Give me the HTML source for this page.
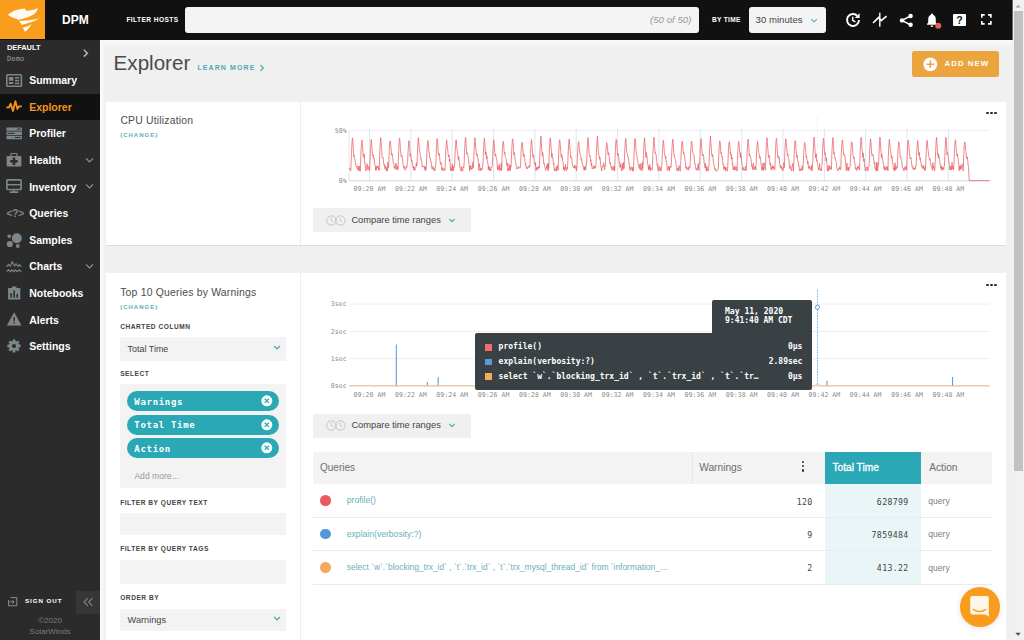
<!DOCTYPE html><html><head><meta charset="utf-8"><title>Explorer</title><style>
*{margin:0;padding:0;box-sizing:border-box}
html,body{width:1024px;height:640px;overflow:hidden;background:#f0f0f0;font-family:"Liberation Sans", sans-serif;}
.b{position:absolute}
.t{position:absolute;height:20px;line-height:20px;white-space:nowrap;color:#444;font-size:10px}
.m{font-family:"DejaVu Sans Mono", "Liberation Mono", monospace}
.nav{color:#fff;font-weight:bold;font-size:10.5px}
.lab{font-weight:bold;font-size:6.6px;letter-spacing:0.53px;color:#444}
.chg{font-weight:bold;font-size:6px;letter-spacing:1.0px;color:#5aacb6}
.ax{font-family:"DejaVu Sans Mono", "Liberation Mono", monospace;font-size:6.6px;color:#8a8a8a}
.tt{font-family:"DejaVu Sans Mono", "Liberation Mono", monospace;font-weight:bold;font-size:8px;color:#fff}
.pill{position:absolute;left:127.2px;width:151.6px;height:20px;border-radius:10px;background:#2aa8b5}
.pill span{position:absolute;left:7.1px;top:0.6px;line-height:20px;font-family:"DejaVu Sans Mono", "Liberation Mono", monospace;font-weight:bold;font-size:9px;color:#fff;letter-spacing:0.7px}
.q{font-size:8.6px;color:#6ab0bc}
.num{font-family:"DejaVu Sans Mono", "Liberation Mono", monospace;font-size:8.2px;color:#444;letter-spacing:0.35px;margin-right:-0.35px}
.act{font-size:8.6px;color:#808080}
svg{position:absolute;overflow:visible}
</style></head><body>
<div class="b " style="left:100.0px;top:40.0px;width:912.0px;height:600.0px;background:#f0f0f0"></div>
<div class="b " style="left:100.0px;top:40.0px;width:912.0px;height:7.0px;background:linear-gradient(#fafafa,#f6f6f6 40%,#f0f0f0)"></div>
<div class="b " style="left:100.0px;top:40.0px;width:2.3px;height:600.0px;background:#fafafa"></div>
<div class="b " style="left:102.0px;top:40.0px;width:2.0px;height:600.0px;background:linear-gradient(90deg,#f8f8f8,#f3f3f3)"></div>
<div class="b " style="left:104.0px;top:47.0px;width:2.0px;height:593.0px;background:#f1f1f1"></div>
<div class="b " style="left:106.0px;top:101.5px;width:900.0px;height:144.5px;background:#fff;border-bottom:1px solid #ddd"></div>
<div class="b " style="left:299.5px;top:101.5px;width:1.0px;height:143.5px;background:#eee"></div>
<div class="b " style="left:106.0px;top:273.0px;width:900.0px;height:367.0px;background:#fff"></div>
<div class="b " style="left:299.5px;top:273.0px;width:1.0px;height:367.0px;background:#eee"></div>
<div class="b " style="left:0.0px;top:0.0px;width:1012.4px;height:40.0px;background:#111"></div>
<div class="b " style="left:0.0px;top:0.0px;width:45.0px;height:39.4px;background:#f99d1c"></div>
<svg style="left:0;top:0" width="45" height="40" viewBox="0 0 45 40"><g fill="#fffaf0">
<path d="M7.8 15 C10.5 12.6 13.4 11 16.5 10 C19.2 9.2 22 8.6 24.6 8.4 L26.2 10.7 C30.4 10.6 34.6 9.6 37.9 7.9 C37.4 10 36.4 11.8 35 13.2 C32.8 15.2 29.8 16.6 26.8 17.6 C23.8 18.6 20.8 19.2 18.2 20.1 C16.4 18.8 14.6 18 12.6 17.6 C10.6 16.6 9.2 15.8 7.8 15 Z"/>
<path d="M19.3 20.9 C25.6 20.6 32.4 19.8 38.8 18.4 C35.6 20.4 31.8 22 28.2 23.1 C26 23.8 23.6 24.4 21.6 25.1 Z"/>
<path d="M22.8 27.4 C26.2 27 29.4 25.8 32 24 C30 26.8 27.6 29.6 25 32 Z"/>
</g></svg>
<div class="t " style="left:62.0px;top:10.0px;color:#fff;font-weight:bold;font-size:12px">DPM</div>
<div class="t " style="left:126.4px;top:10.0px;color:#fff;font-weight:bold;font-size:6.6px;letter-spacing:0.42px">FILTER HOSTS</div>
<div class="b " style="left:185.4px;top:6.8px;width:513.2px;height:26.4px;background:#f4f4f4;border-radius:3px"></div>
<div class="t " style="right:332.6px;text-align:right;top:9.8px;color:#999;font-style:italic;font-size:9.7px">(50 of 50)</div>
<div class="t " style="left:712.0px;top:10.0px;color:#fff;font-weight:bold;font-size:6.6px;letter-spacing:0.3px">BY TIME</div>
<div class="b " style="left:748.6px;top:6.8px;width:77.4px;height:26.4px;background:#f4f4f4;border-radius:3px"></div>
<div class="t " style="left:755.6px;top:9.8px;color:#444;font-size:9.6px">30 minutes</div>
<svg style="left:809.5px;top:17.5px" width="8" height="6" viewBox="0 0 8 6"><path d="M1.2 1.2 L4 4 L6.8 1.2" fill="none" stroke="#4fb0bd" stroke-width="1.1"/></svg>
<svg style="left:844.7px;top:12px" width="16" height="16" viewBox="0 0 16 16" fill="none" stroke="#fff" stroke-width="1.9">
<path d="M12.4 3.9 A6 6 0 1 0 14 8"/><path d="M14.6 1.2 L14.6 6 L9.8 6 Z" fill="#fff" stroke="none"/>
<path d="M7.7 4.8 L7.7 8.3 L10.4 9.8" stroke-width="1.5"/></svg>
<svg style="left:871.6px;top:12px" width="16" height="16" viewBox="0 0 16 16" fill="none" stroke="#fff" stroke-width="1.7">
<path d="M1 11 L6.6 5.6 L9.2 8.6 L14.6 4.2"/><path d="M7.8 0.8 L7.8 14.8" stroke-width="1.4"/></svg>
<svg style="left:899px;top:12.6px" width="15" height="15" viewBox="0 0 15 15"><g stroke="#fff" stroke-width="1.5" fill="none"><path d="M11.5 3 L3 7.4 L11.5 11.8"/></g>
<g fill="#fff"><circle cx="11.6" cy="3" r="2.2"/><circle cx="3" cy="7.4" r="2.2"/><circle cx="11.6" cy="11.8" r="2.2"/></g></svg>
<svg style="left:924.3px;top:11.5px" width="18" height="18" viewBox="0 0 18 18"><path fill="#fff" d="M8 1.6 C8.8 1.6 9.1 2.1 9.1 2.7 C11 3.3 11.8 5 11.8 7.2 L11.8 10.4 L13 12 L13 12.8 L3 12.8 L3 12 L4.2 10.4 L4.2 7.2 C4.2 5 5 3.3 6.9 2.7 C6.9 2.1 7.2 1.6 8 1.6 Z M6.7 13.5 L9.3 13.5 C9.3 14.4 8.8 15 8 15 C7.2 15 6.7 14.4 6.7 13.5 Z"/>
<circle cx="14.2" cy="13.7" r="3" fill="#ef5a5a"/></svg>
<div class="b " style="left:953.2px;top:13.7px;width:12.5px;height:11.9px;background:#fff;border-radius:1px"></div>
<div class="t " style="left:859.4px;width:200px;text-align:center;top:9.9px;color:#111;font-weight:bold;font-size:10.5px">?</div>
<svg style="left:980.6px;top:14.4px" width="10.7" height="10.7" viewBox="0 0 11 11" fill="none" stroke="#fff" stroke-width="1.7">
<path d="M0.85 3.8 L0.85 0.85 L3.8 0.85"/><path d="M7.2 0.85 L10.15 0.85 L10.15 3.8"/><path d="M10.15 7.2 L10.15 10.15 L7.2 10.15"/><path d="M3.8 10.15 L0.85 10.15 L0.85 7.2"/></svg>
<div class="b " style="left:1012.4px;top:0.0px;width:11.6px;height:640.0px;background:#f1f1f1"></div>
<div class="b " style="left:1012.0px;top:0.0px;width:1.0px;height:40.0px;background:#666"></div>
<div class="b " style="left:1014.2px;top:11.4px;width:8.8px;height:460.0px;background:#c1c1c1"></div>
<svg style="left:1012.4px;top:0" width="12" height="12" viewBox="0 0 12 12"><path d="M3.6 7.6 L6.1 4.8 L8.6 7.6 Z" fill="#a3a3a3"/></svg>
<svg style="left:1012.4px;top:628px" width="12" height="12" viewBox="0 0 12 12"><path d="M3.4 4.8 L8.8 4.8 L6.1 7.8 Z" fill="#505050"/></svg>
<div class="b " style="left:0.0px;top:40.0px;width:100.0px;height:600.0px;background:#2b2b2b"></div>
<div class="t " style="left:6.9px;top:37.6px;color:#fff;font-weight:bold;font-size:7.4px">DEFAULT</div>
<div class="t m" style="left:6.9px;top:48.6px;color:#9a9a9a;font-size:7.3px">Demo</div>
<svg style="left:82px;top:48px" width="8" height="11" viewBox="0 0 8 11"><path d="M1.8 1.8 L5.4 5.2 L1.8 8.6" fill="none" stroke="#b4b4b4" stroke-width="1.5"/></svg>
<div class="b " style="left:0.0px;top:94.0px;width:100.0px;height:25.5px;background:#111"></div>
<div class="t nav" style="left:29.2px;top:70.1px;">Summary</div>
<div class="t nav" style="left:29.2px;top:96.7px;color:#f7941d">Explorer</div>
<div class="t nav" style="left:29.2px;top:123.3px;">Profiler</div>
<div class="t nav" style="left:29.2px;top:149.9px;">Health</div>
<svg style="left:84.6px;top:156.7px" width="9" height="7" viewBox="0 0 9 7"><path d="M1 1.4 L4.5 4.9 L8 1.4" fill="none" stroke="#8b9091" stroke-width="1.2"/></svg>
<div class="t nav" style="left:29.2px;top:176.5px;">Inventory</div>
<svg style="left:84.6px;top:183.3px" width="9" height="7" viewBox="0 0 9 7"><path d="M1 1.4 L4.5 4.9 L8 1.4" fill="none" stroke="#8b9091" stroke-width="1.2"/></svg>
<div class="t nav" style="left:29.2px;top:203.1px;">Queries</div>
<div class="t nav" style="left:29.2px;top:229.7px;">Samples</div>
<div class="t nav" style="left:29.2px;top:256.3px;">Charts</div>
<svg style="left:84.6px;top:263.1px" width="9" height="7" viewBox="0 0 9 7"><path d="M1 1.4 L4.5 4.9 L8 1.4" fill="none" stroke="#8b9091" stroke-width="1.2"/></svg>
<div class="t nav" style="left:29.2px;top:282.9px;">Notebooks</div>
<div class="t nav" style="left:29.2px;top:309.5px;">Alerts</div>
<div class="t nav" style="left:29.2px;top:336.1px;">Settings</div>
<svg style="left:6.2px;top:73.8px" width="16" height="13" viewBox="0 0 16 13"><rect x="0.8" y="0.8" width="14.6" height="11.4" rx="0.8" fill="none" stroke="#7d8789" stroke-width="1.6"/><rect x="2.8" y="3" width="4.6" height="3.8" fill="#7d8789"/><rect x="2.8" y="8" width="4.6" height="2" fill="#7d8789"/><rect x="9" y="3" width="4.2" height="1.6" fill="#7d8789"/><rect x="9" y="5.8" width="4.2" height="1.6" fill="#7d8789"/><rect x="9" y="8.6" width="4.2" height="1.6" fill="#7d8789"/></svg>
<svg style="left:6.2px;top:100.1px" width="16" height="12" viewBox="0 0 16 12"><path d="M0.4 7.4 L3 7.4 L4.6 3.6 L7 11 L9.4 1.2 L11.4 9 L12.8 6.4 L15.8 6.4" fill="none" stroke="#f7941d" stroke-width="1.8" stroke-linejoin="round"/></svg>
<svg style="left:6.2px;top:126.8px" width="16" height="13" viewBox="0 0 16 13"><rect x="0.4" y="0.4" width="15.6" height="3.4" rx="0.6" fill="#7d8789"/><rect x="0.4" y="4.6" width="15.6" height="3.4" rx="0.6" fill="#7d8789"/><rect x="0.4" y="8.8" width="15.6" height="3.4" rx="0.6" fill="#7d8789"/><rect x="11" y="1.6" width="3.6" height="1" fill="#2b2b2b"/><rect x="1.6" y="5.8" width="7" height="1" fill="#2b2b2b"/><rect x="9" y="10" width="5.6" height="1" fill="#2b2b2b"/></svg>
<svg style="left:6.2px;top:153.3px" width="16" height="14" viewBox="0 0 16 14"><path d="M5 3 L5 1.2 Q5 0.5 5.7 0.5 L10.3 0.5 Q11 0.5 11 1.2 L11 3" fill="none" stroke="#7d8789" stroke-width="1.2"/><rect x="0.6" y="3" width="14.8" height="10.6" rx="1" fill="#7d8789"/><path d="M6.7 4.6 L9.3 4.6 L9.3 7 L11.7 7 L11.7 9.6 L9.3 9.6 L9.3 12 L6.7 12 L6.7 9.6 L4.3 9.6 L4.3 7 L6.7 7 Z" fill="#2b2b2b"/></svg>
<svg style="left:6.2px;top:179.3px" width="16" height="14" viewBox="0 0 16 14"><rect x="0.9" y="0.9" width="14.2" height="9.6" rx="0.8" fill="none" stroke="#7d8789" stroke-width="1.7"/><path d="M0.9 5.7 L15.1 5.7" stroke="#7d8789" stroke-width="1.5"/><path d="M8 10.5 L8 12.6 M3.8 13.1 L12.2 13.1" stroke="#7d8789" stroke-width="1.6"/></svg>
<div class="t " style="left:6.6px;top:203.9px;color:#7d8789;font-weight:bold;font-size:10.2px;letter-spacing:-0.25px">&lt;?&gt;</div>
<svg style="left:6.2px;top:232.6px" width="16" height="15.5" viewBox="0 0 16 15.5"><circle cx="10.8" cy="5.2" r="5" fill="#7d8789"/><circle cx="3.8" cy="11" r="3.1" fill="#7d8789"/><circle cx="3.2" cy="3.2" r="1.8" fill="#7d8789"/><circle cx="11.8" cy="13" r="1.9" fill="#7d8789"/></svg>
<svg style="left:6.2px;top:260.7px" width="16" height="12" viewBox="0 0 16 12"><path d="M0.6 5.8 L2.6 3.4 L4.2 5.2 L6.2 0.8 L8.4 5 L10 2.6 L12 5.4 L13.6 3.6 L15.4 6" fill="none" stroke="#7d8789" stroke-width="1.1"/><path d="M0.6 10.6 L2.4 8.8 L4.2 10.6 L6 8.8 L7.8 10.6 L9.6 8.8 L11.4 10.6 L13.2 8.8 L15.4 10.8" fill="none" stroke="#7d8789" stroke-width="1.1"/></svg>
<svg style="left:6.2px;top:285.5px" width="16" height="14" viewBox="0 0 16 14"><path d="M2.1 2 L6 2 L6 0.6 L10.4 0.6 L10.4 2 L14.3 2 L14.3 13.6 L2.1 13.6 Z" fill="#7d8789"/><rect x="4.4" y="7" width="1.5" height="4.8" fill="#2b2b2b"/><rect x="7.45" y="4.4" width="1.5" height="7.4" fill="#2b2b2b"/><rect x="10.5" y="8" width="1.5" height="3.8" fill="#2b2b2b"/></svg>
<svg style="left:6.2px;top:312.3px" width="16" height="14" viewBox="0 0 16 14"><path d="M8.2 0.8 L15.1 13.2 L1.3 13.2 Z" fill="#7d8789" stroke="#7d8789" stroke-width="0.6" stroke-linejoin="round"/><rect x="7.5" y="5" width="1.4" height="4.2" fill="#2b2b2b"/><rect x="7.5" y="10.2" width="1.4" height="1.4" fill="#2b2b2b"/></svg>
<svg style="left:6.2px;top:339.1px" width="16" height="14" viewBox="0 0 16 14"><rect x="6.6" y="0.4" width="2.8" height="3.4" rx="0.4" fill="#7d8789" transform="rotate(0 8 7)"/><rect x="6.6" y="0.4" width="2.8" height="3.4" rx="0.4" fill="#7d8789" transform="rotate(45 8 7)"/><rect x="6.6" y="0.4" width="2.8" height="3.4" rx="0.4" fill="#7d8789" transform="rotate(90 8 7)"/><rect x="6.6" y="0.4" width="2.8" height="3.4" rx="0.4" fill="#7d8789" transform="rotate(135 8 7)"/><rect x="6.6" y="0.4" width="2.8" height="3.4" rx="0.4" fill="#7d8789" transform="rotate(180 8 7)"/><rect x="6.6" y="0.4" width="2.8" height="3.4" rx="0.4" fill="#7d8789" transform="rotate(225 8 7)"/><rect x="6.6" y="0.4" width="2.8" height="3.4" rx="0.4" fill="#7d8789" transform="rotate(270 8 7)"/><rect x="6.6" y="0.4" width="2.8" height="3.4" rx="0.4" fill="#7d8789" transform="rotate(315 8 7)"/><circle cx="8" cy="7" r="5" fill="#7d8789"/><circle cx="8" cy="7" r="2.1" fill="#2b2b2b"/></svg>
<svg style="left:8px;top:596.6px" width="10" height="10" viewBox="0 0 10 10"><path d="M2.4 0.6 L8.8 0.6 L8.8 8.8 L0.6 8.8 L0.6 3" fill="none" stroke="#8b9091" stroke-width="1"/><path d="M1.6 4.9 L6 4.9 M4.4 3.2 L6.1 4.9 L4.4 6.6" fill="none" stroke="#8b9091" stroke-width="1"/></svg>
<div class="t " style="left:25.0px;top:591.4px;color:#fff;font-weight:bold;font-size:6.2px;letter-spacing:0.95px">SIGN OUT</div>
<div class="b " style="left:76.4px;top:590.6px;width:23.6px;height:23.2px;background:#363636"></div>
<svg style="left:83px;top:597.2px" width="11" height="10" viewBox="0 0 11 10"><path d="M4.8 1 L1.2 5 L4.8 9 M9.4 1 L5.8 5 L9.4 9" fill="none" stroke="#8b9091" stroke-width="1.1"/></svg>
<div class="t " style="left:-50.0px;width:200px;text-align:center;top:611.4px;color:#7c7c7c;font-size:8px">©2020</div>
<div class="t " style="left:-50.0px;width:200px;text-align:center;top:622.4px;color:#7c7c7c;font-size:8px">SolarWinds</div>
<div class="t " style="left:113.6px;top:53.2px;color:#4a4a4a;font-size:20.6px;height:30px;line-height:30px;margin-top:-5px">Explorer</div>
<div class="t " style="left:197.4px;top:58.2px;color:#4fa9b4;font-weight:bold;font-size:7px;letter-spacing:1.1px">LEARN MORE</div>
<svg style="left:259.4px;top:64.4px" width="6" height="8" viewBox="0 0 6 8"><path d="M1.4 1 L4.4 3.9 L1.4 6.8" fill="none" stroke="#4fa9b4" stroke-width="1.2"/></svg>
<div class="b " style="left:911.8px;top:50.8px;width:87.4px;height:26.4px;background:#eba43e;border-radius:2.5px"></div>
<svg style="left:922.6px;top:56.6px" width="15" height="15" viewBox="0 0 15 15"><circle cx="7.3" cy="7.3" r="6.9" fill="#fff"/><path d="M7.3 3.6 L7.3 11 M3.6 7.3 L11 7.3" stroke="#eba43e" stroke-width="1.5"/></svg>
<div class="t " style="left:944.6px;top:54.0px;color:#fff;font-weight:bold;font-size:7.8px;letter-spacing:1.05px">ADD NEW</div>
<div class="t " style="left:120.4px;top:110.6px;font-size:10.4px;letter-spacing:0.2px;color:#4c4c4c">CPU Utilization</div>
<div class="t chg" style="left:120.2px;top:125.2px;">(CHANGE)</div>
<div class="b" style="left:986.3px;top:111.5px;width:2.5px;height:2.5px;border-radius:50%;background:#2a2a2a"></div>
<div class="b" style="left:990.1px;top:111.5px;width:2.5px;height:2.5px;border-radius:50%;background:#2a2a2a"></div>
<div class="b" style="left:994.0px;top:111.5px;width:2.5px;height:2.5px;border-radius:50%;background:#2a2a2a"></div>
<svg style="left:0;top:0" width="1024" height="640" viewBox="0 0 1024 640"><path d="M349.0 130.6 L989.6 130.6" stroke="#efefef" stroke-width="1"/><path d="M369.5 129.0 L369.5 180.8" stroke="#cddee7" stroke-width="0.7"/><path d="M410.9 129.0 L410.9 180.8" stroke="#cddee7" stroke-width="0.7"/><path d="M452.2 129.0 L452.2 180.8" stroke="#cddee7" stroke-width="0.7"/><path d="M493.6 129.0 L493.6 180.8" stroke="#cddee7" stroke-width="0.7"/><path d="M534.9 129.0 L534.9 180.8" stroke="#cddee7" stroke-width="0.7"/><path d="M576.2 129.0 L576.2 180.8" stroke="#cddee7" stroke-width="0.7"/><path d="M617.6 129.0 L617.6 180.8" stroke="#cddee7" stroke-width="0.7"/><path d="M659.0 129.0 L659.0 180.8" stroke="#cddee7" stroke-width="0.7"/><path d="M700.3 129.0 L700.3 180.8" stroke="#cddee7" stroke-width="0.7"/><path d="M741.7 129.0 L741.7 180.8" stroke="#cddee7" stroke-width="0.7"/><path d="M783.0 129.0 L783.0 180.8" stroke="#cddee7" stroke-width="0.7"/><path d="M824.4 129.0 L824.4 180.8" stroke="#cddee7" stroke-width="0.7"/><path d="M865.7 129.0 L865.7 180.8" stroke="#cddee7" stroke-width="0.7"/><path d="M907.1 129.0 L907.1 180.8" stroke="#cddee7" stroke-width="0.7"/><path d="M948.4 129.0 L948.4 180.8" stroke="#cddee7" stroke-width="0.7"/><path d="M349.0 130.6 L349.0 180.8" stroke="#e6e6e6" stroke-width="1"/><path d="M349.0 180.8 L989.6 180.8" stroke="#d6d6d6" stroke-width="1"/><path d="M349.00 168.2 L349.36 168.7 L349.72 168.0 L350.08 168.4 L350.44 170.7 L350.80 170.8 L351.16 161.4 L351.52 153.4 L351.88 144.7 L352.24 139.2 L352.60 137.9 L352.96 143.0 L353.32 149.6 L353.68 156.4 L354.04 154.9 L354.40 158.2 L354.76 158.9 L355.12 160.4 L355.48 164.1 L355.84 164.0 L356.20 166.9 L356.56 166.6 L356.92 167.7 L357.28 167.6 L357.64 169.7 L358.00 165.8 L358.36 167.4 L358.72 170.0 L359.08 170.9 L359.44 169.1 L359.80 166.0 L360.16 171.3 L360.52 162.6 L360.88 154.2 L361.24 146.3 L361.60 142.3 L361.96 140.1 L362.32 143.3 L362.68 147.9 L363.04 154.3 L363.40 157.4 L363.76 156.5 L364.12 153.9 L364.48 157.0 L364.84 163.2 L365.20 164.9 L365.56 168.4 L365.92 170.9 L366.28 170.3 L366.64 168.8 L367.00 163.7 L367.36 164.2 L367.72 168.9 L368.08 169.8 L368.44 166.8 L368.80 166.4 L369.16 166.5 L369.52 170.7 L369.88 165.2 L370.24 156.1 L370.60 147.5 L370.96 143.0 L371.32 139.5 L371.68 143.4 L372.04 148.2 L372.40 151.8 L372.76 156.4 L373.12 154.8 L373.48 157.2 L373.84 158.5 L374.20 157.7 L374.56 163.0 L374.92 165.1 L375.28 166.5 L375.64 170.4 L376.00 166.7 L376.36 170.2 L376.72 166.1 L377.08 166.0 L377.44 167.9 L377.80 167.2 L378.16 165.9 L378.52 169.8 L378.88 168.0 L379.24 170.3 L379.60 157.9 L379.96 149.0 L380.32 142.4 L380.68 137.6 L381.04 140.7 L381.40 146.6 L381.76 149.2 L382.12 156.6 L382.48 158.2 L382.84 157.5 L383.20 158.2 L383.56 162.7 L383.92 164.4 L384.28 165.9 L384.64 164.6 L385.00 169.3 L385.36 165.8 L385.72 167.4 L386.08 167.0 L386.44 171.2 L386.80 167.4 L387.16 171.1 L387.52 168.6 L387.88 162.2 L388.24 168.2 L388.60 166.3 L388.96 158.4 L389.32 149.2 L389.68 143.9 L390.04 140.9 L390.40 141.5 L390.76 145.5 L391.12 148.8 L391.48 155.2 L391.84 153.5 L392.20 153.6 L392.56 157.2 L392.92 158.9 L393.28 162.8 L393.64 164.2 L394.00 164.4 L394.36 167.7 L394.72 166.4 L395.08 169.1 L395.44 168.1 L395.80 163.1 L396.16 163.6 L396.52 167.9 L396.88 170.0 L397.24 168.5 L397.60 166.3 L397.96 169.6 L398.32 160.7 L398.68 151.6 L399.04 143.4 L399.40 138.3 L399.76 138.4 L400.12 143.3 L400.48 150.5 L400.84 153.1 L401.20 156.9 L401.56 156.1 L401.92 155.5 L402.28 156.8 L402.64 159.4 L403.00 164.9 L403.36 166.4 L403.72 166.0 L404.08 168.5 L404.44 166.6 L404.80 166.0 L405.16 170.3 L405.52 169.7 L405.88 169.0 L406.24 168.5 L406.60 166.6 L406.96 167.3 L407.32 162.9 L407.68 161.4 L408.04 152.6 L408.40 146.3 L408.76 140.8 L409.12 140.5 L409.48 144.7 L409.84 149.2 L410.20 156.4 L410.56 153.1 L410.92 157.1 L411.28 159.2 L411.64 161.6 L412.00 160.5 L412.36 164.1 L412.72 165.7 L413.08 167.6 L413.44 166.0 L413.80 170.2 L414.16 166.8 L414.52 168.7 L414.88 170.3 L415.24 169.4 L415.60 168.4 L415.96 167.1 L416.32 162.7 L416.68 166.1 L417.04 163.8 L417.40 154.3 L417.76 146.2 L418.12 140.0 L418.48 137.5 L418.84 142.1 L419.20 147.5 L419.56 151.1 L419.92 152.3 L420.28 155.7 L420.64 155.8 L421.00 160.3 L421.36 159.5 L421.72 161.4 L422.08 165.2 L422.44 167.3 L422.80 166.3 L423.16 165.9 L423.52 166.9 L423.88 166.2 L424.24 165.8 L424.60 168.8 L424.96 167.0 L425.32 171.1 L425.68 166.8 L426.04 169.4 L426.40 165.3 L426.76 156.2 L427.12 148.1 L427.48 143.6 L427.84 140.4 L428.20 143.7 L428.56 147.2 L428.92 152.3 L429.28 152.2 L429.64 157.9 L430.00 158.1 L430.36 158.0 L430.72 161.7 L431.08 161.5 L431.44 164.8 L431.80 168.4 L432.16 168.2 L432.52 169.2 L432.88 166.3 L433.24 166.6 L433.60 168.4 L433.96 170.2 L434.32 168.5 L434.68 171.1 L435.04 169.0 L435.40 168.2 L435.76 163.9 L436.12 157.1 L436.48 148.8 L436.84 142.4 L437.20 138.5 L437.56 142.0 L437.92 146.6 L438.28 153.9 L438.64 155.2 L439.00 153.4 L439.36 153.7 L439.72 158.1 L440.08 161.2 L440.44 164.3 L440.80 164.4 L441.16 162.6 L441.52 163.4 L441.88 170.2 L442.24 167.5 L442.60 169.3 L442.96 170.7 L443.32 170.6 L443.68 169.9 L444.04 168.3 L444.40 169.0 L444.76 170.4 L445.12 167.8 L445.48 158.7 L445.84 149.1 L446.20 144.2 L446.56 139.9 L446.92 141.9 L447.28 145.6 L447.64 149.2 L448.00 152.3 L448.36 156.3 L448.72 156.9 L449.08 155.1 L449.44 161.3 L449.80 159.1 L450.16 162.4 L450.52 170.5 L450.88 167.2 L451.24 170.7 L451.60 168.9 L451.96 170.6 L452.32 164.0 L452.68 170.2 L453.04 166.2 L453.40 170.6 L453.76 167.1 L454.12 166.7 L454.48 167.2 L454.84 160.1 L455.20 151.1 L455.56 144.5 L455.92 140.2 L456.28 139.9 L456.64 144.9 L457.00 149.7 L457.36 151.1 L457.72 152.6 L458.08 158.1 L458.44 159.9 L458.80 156.5 L459.16 161.9 L459.52 162.6 L459.88 168.0 L460.24 168.7 L460.60 168.9 L460.96 171.2 L461.32 166.6 L461.68 168.8 L462.04 169.0 L462.40 170.4 L462.76 171.2 L463.12 166.8 L463.48 167.8 L463.84 168.0 L464.20 161.0 L464.56 152.2 L464.92 145.6 L465.28 139.0 L465.64 137.4 L466.00 142.6 L466.36 148.6 L466.72 154.1 L467.08 152.7 L467.44 153.3 L467.80 155.8 L468.16 157.2 L468.52 159.7 L468.88 164.3 L469.24 165.2 L469.60 170.9 L469.96 165.2 L470.32 169.3 L470.68 167.8 L471.04 166.0 L471.40 169.4 L471.76 168.1 L472.12 169.1 L472.48 167.7 L472.84 162.3 L473.20 167.9 L473.56 163.6 L473.92 154.3 L474.28 147.2 L474.64 141.1 L475.00 137.7 L475.36 142.9 L475.72 148.5 L476.08 150.4 L476.44 154.7 L476.80 155.4 L477.16 153.9 L477.52 158.1 L477.88 157.9 L478.24 162.5 L478.60 164.2 L478.96 170.8 L479.32 163.6 L479.68 166.1 L480.04 168.7 L480.40 168.5 L480.76 170.9 L481.12 168.9 L481.48 168.0 L481.84 169.7 L482.20 169.7 L482.56 166.1 L482.92 165.1 L483.28 156.4 L483.64 148.2 L484.00 141.7 L484.36 138.4 L484.72 141.6 L485.08 147.0 L485.44 155.0 L485.80 151.9 L486.16 152.7 L486.52 159.0 L486.88 155.8 L487.24 160.9 L487.60 163.0 L487.96 162.7 L488.32 169.9 L488.68 166.1 L489.04 168.7 L489.40 166.8 L489.76 170.6 L490.12 168.7 L490.48 171.0 L490.84 170.6 L491.20 167.6 L491.56 168.0 L491.92 167.0 L492.28 165.8 L492.64 156.9 L493.00 149.2 L493.36 144.5 L493.72 139.8 L494.08 142.2 L494.44 146.7 L494.80 152.5 L495.16 156.2 L495.52 154.2 L495.88 155.7 L496.24 157.4 L496.60 159.2 L496.96 160.9 L497.32 167.0 L497.68 169.9 L498.04 166.2 L498.40 167.5 L498.76 169.8 L499.12 164.3 L499.48 164.8 L499.84 170.8 L500.20 168.2 L500.56 169.2 L500.92 169.4 L501.28 163.1 L501.64 170.6 L502.00 158.5 L502.36 149.2 L502.72 145.3 L503.08 141.3 L503.44 142.6 L503.80 145.8 L504.16 151.9 L504.52 153.8 L504.88 152.3 L505.24 156.9 L505.60 157.3 L505.96 158.2 L506.32 159.5 L506.68 165.1 L507.04 165.7 L507.40 162.9 L507.76 170.8 L508.12 168.6 L508.48 169.6 L508.84 170.8 L509.20 164.1 L509.56 169.6 L509.92 167.4 L510.28 170.5 L510.64 165.7 L511.00 167.3 L511.36 159.6 L511.72 150.5 L512.08 143.9 L512.44 139.5 L512.80 138.8 L513.16 144.6 L513.52 150.5 L513.88 154.7 L514.24 152.5 L514.60 153.3 L514.96 158.8 L515.32 160.1 L515.68 162.5 L516.04 165.1 L516.40 167.6 L516.76 169.1 L517.12 168.1 L517.48 168.3 L517.84 168.2 L518.20 167.1 L518.56 166.2 L518.92 168.4 L519.28 168.1 L519.64 167.7 L520.00 168.2 L520.36 167.3 L520.72 161.4 L521.08 152.1 L521.44 147.3 L521.80 142.7 L522.16 142.3 L522.52 144.8 L522.88 149.0 L523.24 155.0 L523.60 156.7 L523.96 154.0 L524.32 156.9 L524.68 157.3 L525.04 161.9 L525.40 164.8 L525.76 163.7 L526.12 167.5 L526.48 168.3 L526.84 167.4 L527.20 169.0 L527.56 167.6 L527.92 166.8 L528.28 166.4 L528.64 167.7 L529.00 167.3 L529.36 165.4 L529.72 167.2 L530.08 163.4 L530.44 154.7 L530.80 147.4 L531.16 142.1 L531.52 139.6 L531.88 142.7 L532.24 149.0 L532.60 154.0 L532.96 157.3 L533.32 154.6 L533.68 155.0 L534.04 160.4 L534.40 163.5 L534.76 163.6 L535.12 165.5 L535.48 162.7 L535.84 170.7 L536.20 170.1 L536.56 167.3 L536.92 170.0 L537.28 169.7 L537.64 167.1 L538.00 168.2 L538.36 168.6 L538.72 166.2 L539.08 168.2 L539.44 164.8 L539.80 156.1 L540.16 148.1 L540.52 140.3 L540.88 136.0 L541.24 141.2 L541.60 146.9 L541.96 152.2 L542.32 156.2 L542.68 152.4 L543.04 155.5 L543.40 159.8 L543.76 163.4 L544.12 163.0 L544.48 166.4 L544.84 166.9 L545.20 167.9 L545.56 170.4 L545.92 169.8 L546.28 168.4 L546.64 165.8 L547.00 168.3 L547.36 163.5 L547.72 166.7 L548.08 170.8 L548.44 163.8 L548.80 168.6 L549.16 156.5 L549.52 148.4 L549.88 141.6 L550.24 137.9 L550.60 140.0 L550.96 146.2 L551.32 149.2 L551.68 157.2 L552.04 153.3 L552.40 157.9 L552.76 157.6 L553.12 159.9 L553.48 164.5 L553.84 163.1 L554.20 169.5 L554.56 170.8 L554.92 168.7 L555.28 169.3 L555.64 170.7 L556.00 168.7 L556.36 166.7 L556.72 171.2 L557.08 167.3 L557.44 165.2 L557.80 165.8 L558.16 170.1 L558.52 159.0 L558.88 149.8 L559.24 143.8 L559.60 139.8 L559.96 141.0 L560.32 145.7 L560.68 150.1 L561.04 156.2 L561.40 157.0 L561.76 154.4 L562.12 158.6 L562.48 157.0 L562.84 161.7 L563.20 163.3 L563.56 169.4 L563.92 167.2 L564.28 170.7 L564.64 167.4 L565.00 169.0 L565.36 164.5 L565.72 170.0 L566.08 170.6 L566.44 170.9 L566.80 168.9 L567.16 167.0 L567.52 169.1 L567.88 160.4 L568.24 151.8 L568.60 144.8 L568.96 139.5 L569.32 138.9 L569.68 144.1 L570.04 150.0 L570.40 153.4 L570.76 158.0 L571.12 156.7 L571.48 158.3 L571.84 158.3 L572.20 164.0 L572.56 165.0 L572.92 166.9 L573.28 166.9 L573.64 167.9 L574.00 167.0 L574.36 168.2 L574.72 165.0 L575.08 167.3 L575.44 168.4 L575.80 166.6 L576.16 166.0 L576.52 170.8 L576.88 168.1 L577.24 162.0 L577.60 152.0 L577.96 146.7 L578.32 142.4 L578.68 141.6 L579.04 144.1 L579.40 149.8 L579.76 151.1 L580.12 154.8 L580.48 155.2 L580.84 156.6 L581.20 160.3 L581.56 158.8 L581.92 160.8 L582.28 164.6 L582.64 164.4 L583.00 166.7 L583.36 166.3 L583.72 168.1 L584.08 170.2 L584.44 167.3 L584.80 170.3 L585.16 166.1 L585.52 169.6 L585.88 169.2 L586.24 163.3 L586.60 163.7 L586.96 154.2 L587.32 147.1 L587.68 141.0 L588.04 137.5 L588.40 142.9 L588.76 148.1 L589.12 154.3 L589.48 154.5 L589.84 156.5 L590.20 155.9 L590.56 161.3 L590.92 159.8 L591.28 165.5 L591.64 163.3 L592.00 167.9 L592.36 169.0 L592.72 167.5 L593.08 167.1 L593.44 165.8 L593.80 166.5 L594.16 168.9 L594.52 166.3 L594.88 168.4 L595.24 166.0 L595.60 167.3 L595.96 164.4 L596.32 155.6 L596.68 147.0 L597.04 141.2 L597.40 136.3 L597.76 141.6 L598.12 147.5 L598.48 152.6 L598.84 154.9 L599.20 156.0 L599.56 159.1 L599.92 157.0 L600.28 160.3 L600.64 164.4 L601.00 166.8 L601.36 169.1 L601.72 170.9 L602.08 165.9 L602.44 166.5 L602.80 166.8 L603.16 167.1 L603.52 162.8 L603.88 163.4 L604.24 168.3 L604.60 169.9 L604.96 166.0 L605.32 166.3 L605.68 157.4 L606.04 149.1 L606.40 144.6 L606.76 142.5 L607.12 144.4 L607.48 146.7 L607.84 152.8 L608.20 154.8 L608.56 152.7 L608.92 153.2 L609.28 158.1 L609.64 161.8 L610.00 163.7 L610.36 162.6 L610.72 166.3 L611.08 166.6 L611.44 168.7 L611.80 166.4 L612.16 170.1 L612.52 170.2 L612.88 167.5 L613.24 167.3 L613.60 166.3 L613.96 170.5 L614.32 166.1 L614.68 170.8 L615.04 159.0 L615.40 149.3 L615.76 144.0 L616.12 139.3 L616.48 140.5 L616.84 145.0 L617.20 149.3 L617.56 155.5 L617.92 154.2 L618.28 153.5 L618.64 157.1 L619.00 161.3 L619.36 163.3 L619.72 162.1 L620.08 167.6 L620.44 164.2 L620.80 165.8 L621.16 168.3 L621.52 171.0 L621.88 169.7 L622.24 163.3 L622.60 169.7 L622.96 169.9 L623.32 168.2 L623.68 162.3 L624.04 168.7 L624.40 160.4 L624.76 150.5 L625.12 144.1 L625.48 139.2 L625.84 138.4 L626.20 143.7 L626.56 150.4 L626.92 153.1 L627.28 153.4 L627.64 155.5 L628.00 157.3 L628.36 157.2 L628.72 160.5 L629.08 164.1 L629.44 164.2 L629.80 170.3 L630.16 170.3 L630.52 170.0 L630.88 167.0 L631.24 166.9 L631.60 168.6 L631.96 168.1 L632.32 171.1 L632.68 167.3 L633.04 170.3 L633.40 171.2 L633.76 161.8 L634.12 152.8 L634.48 145.6 L634.84 139.1 L635.20 138.4 L635.56 142.3 L635.92 148.9 L636.28 153.2 L636.64 153.3 L637.00 157.1 L637.36 159.1 L637.72 160.0 L638.08 164.0 L638.44 164.9 L638.80 165.8 L639.16 168.4 L639.52 164.5 L639.88 166.7 L640.24 169.9 L640.60 167.4 L640.96 163.4 L641.32 169.0 L641.68 170.1 L642.04 171.0 L642.40 162.3 L642.76 168.7 L643.12 163.9 L643.48 154.6 L643.84 145.9 L644.20 141.2 L644.56 137.6 L644.92 142.6 L645.28 148.2 L645.64 155.4 L646.00 157.8 L646.36 152.5 L646.72 155.1 L647.08 157.1 L647.44 162.5 L647.80 164.8 L648.16 165.7 L648.52 169.9 L648.88 166.1 L649.24 169.4 L649.60 164.4 L649.96 169.0 L650.32 170.9 L650.68 167.4 L651.04 168.0 L651.40 168.7 L651.76 169.2 L652.12 170.1 L652.48 165.2 L652.84 155.6 L653.20 147.9 L653.56 141.5 L653.92 137.2 L654.28 141.3 L654.64 147.3 L655.00 152.6 L655.36 151.9 L655.72 154.3 L656.08 154.2 L656.44 160.0 L656.80 161.2 L657.16 165.5 L657.52 164.4 L657.88 169.3 L658.24 171.2 L658.60 169.8 L658.96 166.2 L659.32 169.8 L659.68 170.4 L660.04 169.3 L660.40 167.3 L660.76 171.1 L661.12 170.8 L661.48 169.5 L661.84 164.9 L662.20 157.4 L662.56 149.1 L662.92 144.2 L663.28 140.3 L663.64 142.0 L664.00 147.4 L664.36 152.8 L664.72 155.2 L665.08 155.0 L665.44 158.3 L665.80 156.7 L666.16 161.5 L666.52 161.1 L666.88 164.1 L667.24 170.4 L667.60 169.7 L667.96 169.0 L668.32 166.5 L668.68 169.6 L669.04 166.6 L669.40 171.1 L669.76 168.1 L670.12 165.9 L670.48 166.2 L670.84 167.5 L671.20 166.0 L671.56 159.1 L671.92 149.4 L672.28 144.2 L672.64 139.1 L673.00 140.4 L673.36 146.0 L673.72 151.8 L674.08 155.7 L674.44 155.2 L674.80 157.1 L675.16 159.7 L675.52 160.2 L675.88 162.2 L676.24 166.7 L676.60 167.6 L676.96 170.7 L677.32 168.9 L677.68 168.0 L678.04 168.2 L678.40 171.1 L678.76 165.7 L679.12 165.5 L679.48 168.5 L679.84 168.7 L680.20 171.1 L680.56 166.3 L680.92 160.6 L681.28 150.9 L681.64 146.0 L682.00 141.6 L682.36 141.2 L682.72 144.7 L683.08 150.4 L683.44 153.6 L683.80 152.5 L684.16 154.0 L684.52 156.5 L684.88 158.5 L685.24 162.2 L685.60 164.7 L685.96 168.3 L686.32 166.7 L686.68 169.2 L687.04 167.5 L687.40 168.5 L687.76 169.3 L688.12 170.4 L688.48 170.0 L688.84 166.5 L689.20 168.3 L689.56 168.5 L689.92 168.2 L690.28 161.6 L690.64 152.2 L691.00 145.7 L691.36 142.4 L691.72 141.1 L692.08 144.1 L692.44 149.5 L692.80 152.2 L693.16 153.9 L693.52 154.4 L693.88 154.2 L694.24 156.9 L694.60 163.3 L694.96 163.0 L695.32 166.5 L695.68 168.1 L696.04 169.7 L696.40 168.3 L696.76 169.9 L697.12 170.3 L697.48 167.1 L697.84 167.4 L698.20 163.9 L698.56 168.8 L698.92 170.4 L699.28 162.9 L699.64 163.6 L700.00 154.2 L700.36 146.4 L700.72 141.9 L701.08 138.6 L701.44 143.6 L701.80 148.0 L702.16 153.9 L702.52 156.0 L702.88 153.9 L703.24 154.6 L703.60 156.5 L703.96 160.4 L704.32 163.8 L704.68 164.8 L705.04 167.8 L705.40 163.3 L705.76 169.2 L706.12 170.0 L706.48 171.2 L706.84 166.1 L707.20 170.5 L707.56 168.9 L707.92 169.1 L708.28 171.0 L708.64 167.1 L709.00 165.1 L709.36 155.4 L709.72 146.6 L710.08 141.2 L710.44 136.2 L710.80 141.4 L711.16 146.8 L711.52 152.4 L711.88 155.6 L712.24 156.5 L712.60 154.6 L712.96 156.2 L713.32 161.8 L713.68 163.5 L714.04 164.9 L714.40 167.0 L714.76 169.1 L715.12 168.2 L715.48 170.5 L715.84 170.7 L716.20 169.9 L716.56 170.6 L716.92 171.2 L717.28 170.5 L717.64 170.0 L718.00 169.2 L718.36 167.5 L718.72 156.6 L719.08 149.1 L719.44 144.5 L719.80 140.8 L720.16 142.6 L720.52 146.2 L720.88 153.5 L721.24 152.6 L721.60 155.4 L721.96 156.6 L722.32 156.1 L722.68 160.7 L723.04 165.1 L723.40 164.8 L723.76 167.6 L724.12 169.7 L724.48 166.5 L724.84 168.8 L725.20 167.3 L725.56 171.1 L725.92 167.1 L726.28 169.3 L726.64 169.6 L727.00 170.1 L727.36 171.2 L727.72 166.8 L728.08 158.4 L728.44 149.8 L728.80 145.0 L729.16 141.7 L729.52 142.7 L729.88 145.9 L730.24 153.5 L730.60 152.0 L730.96 155.8 L731.32 154.6 L731.68 159.1 L732.04 157.2 L732.40 164.9 L732.76 164.2 L733.12 170.0 L733.48 169.2 L733.84 166.8 L734.20 167.7 L734.56 169.7 L734.92 166.0 L735.28 169.4 L735.64 170.1 L736.00 168.2 L736.36 166.8 L736.72 169.3 L737.08 171.2 L737.44 160.4 L737.80 151.4 L738.16 145.8 L738.52 141.4 L738.88 142.4 L739.24 145.1 L739.60 150.5 L739.96 152.6 L740.32 157.5 L740.68 152.7 L741.04 157.7 L741.40 156.5 L741.76 163.3 L742.12 164.8 L742.48 165.7 L742.84 170.3 L743.20 167.5 L743.56 169.5 L743.92 169.3 L744.28 170.4 L744.64 169.2 L745.00 170.1 L745.36 166.4 L745.72 167.8 L746.08 170.6 L746.44 167.5 L746.80 161.5 L747.16 152.8 L747.52 146.0 L747.88 141.2 L748.24 139.1 L748.60 143.7 L748.96 149.1 L749.32 156.3 L749.68 154.3 L750.04 155.9 L750.40 156.4 L750.76 158.3 L751.12 158.7 L751.48 165.9 L751.84 166.7 L752.20 165.8 L752.56 169.5 L752.92 165.8 L753.28 163.0 L753.64 165.8 L754.00 170.0 L754.36 167.7 L754.72 166.7 L755.08 168.4 L755.44 166.5 L755.80 169.9 L756.16 163.3 L756.52 154.1 L756.88 146.9 L757.24 143.9 L757.60 141.5 L757.96 144.3 L758.32 149.2 L758.68 152.6 L759.04 153.2 L759.40 155.5 L759.76 158.3 L760.12 156.7 L760.48 158.7 L760.84 161.7 L761.20 165.7 L761.56 166.3 L761.92 170.4 L762.28 167.2 L762.64 169.4 L763.00 163.1 L763.36 170.3 L763.72 166.6 L764.08 162.8 L764.44 165.8 L764.80 166.4 L765.16 170.2 L765.52 164.8 L765.88 156.4 L766.24 147.9 L766.60 142.1 L766.96 137.7 L767.32 142.3 L767.68 147.1 L768.04 151.1 L768.40 156.8 L768.76 157.6 L769.12 155.2 L769.48 158.4 L769.84 162.7 L770.20 165.2 L770.56 162.9 L770.92 167.9 L771.28 170.2 L771.64 167.4 L772.00 169.3 L772.36 165.5 L772.72 167.8 L773.08 166.7 L773.44 168.7 L773.80 166.1 L774.16 170.0 L774.52 169.7 L774.88 169.7 L775.24 156.9 L775.60 148.7 L775.96 141.9 L776.32 138.3 L776.68 140.6 L777.04 146.1 L777.40 152.0 L777.76 157.4 L778.12 155.8 L778.48 157.4 L778.84 158.3 L779.20 157.3 L779.56 163.7 L779.92 164.0 L780.28 167.6 L780.64 165.5 L781.00 166.3 L781.36 168.9 L781.72 166.7 L782.08 168.0 L782.44 170.7 L782.80 170.8 L783.16 169.2 L783.52 169.4 L783.88 162.5 L784.24 167.8 L784.60 158.9 L784.96 149.7 L785.32 143.9 L785.68 138.8 L786.04 140.1 L786.40 144.7 L786.76 148.2 L787.12 151.7 L787.48 155.8 L787.84 153.8 L788.20 156.7 L788.56 158.4 L788.92 159.1 L789.28 167.3 L789.64 168.7 L790.00 167.6 L790.36 165.8 L790.72 165.7 L791.08 169.1 L791.44 170.8 L791.80 167.7 L792.16 167.2 L792.52 166.8 L792.88 163.5 L793.24 171.2 L793.60 166.0 L793.96 160.9 L794.32 151.3 L794.68 145.0 L795.04 140.6 L795.40 141.0 L795.76 144.5 L796.12 150.5 L796.48 154.0 L796.84 157.4 L797.20 155.2 L797.56 159.5 L797.92 161.7 L798.28 161.6 L798.64 165.5 L799.00 165.3 L799.36 169.9 L799.72 171.0 L800.08 168.8 L800.44 168.7 L800.80 170.7 L801.16 170.4 L801.52 168.4 L801.88 167.9 L802.24 165.9 L802.60 170.4 L802.96 167.2 L803.32 162.2 L803.68 152.6 L804.04 147.5 L804.40 143.7 L804.76 142.3 L805.12 144.7 L805.48 149.0 L805.84 151.4 L806.20 157.8 L806.56 156.1 L806.92 159.5 L807.28 160.3 L807.64 163.6 L808.00 161.3 L808.36 167.5 L808.72 168.6 L809.08 166.4 L809.44 168.1 L809.80 166.3 L810.16 169.6 L810.52 169.8 L810.88 168.9 L811.24 169.3 L811.60 165.3 L811.96 170.9 L812.32 168.2 L812.68 163.6 L813.04 154.8 L813.40 146.6 L813.76 140.7 L814.12 137.1 L814.48 142.5 L814.84 147.7 L815.20 153.0 L815.56 157.9 L815.92 156.0 L816.28 153.9 L816.64 161.5 L817.00 160.3 L817.36 160.6 L817.72 166.9 L818.08 168.0 L818.44 169.6 L818.80 168.0 L819.16 168.5 L819.52 163.6 L819.88 170.7 L820.24 169.8 L820.60 168.9 L820.96 169.0 L821.32 170.8 L821.68 166.7 L822.04 165.0 L822.40 155.2 L822.76 147.2 L823.12 141.5 L823.48 138.3 L823.84 141.4 L824.20 147.9 L824.56 151.5 L824.92 154.6 L825.28 152.8 L825.64 155.6 L826.00 161.1 L826.36 157.8 L826.72 161.4 L827.08 165.1 L827.44 171.2 L827.80 169.0 L828.16 165.8 L828.52 170.8 L828.88 168.8 L829.24 169.2 L829.60 165.3 L829.96 169.5 L830.32 167.4 L830.68 167.6 L831.04 167.1 L831.40 169.5 L831.76 157.1 L832.12 147.9 L832.48 142.5 L832.84 137.6 L833.20 140.4 L833.56 145.5 L833.92 154.0 L834.28 152.5 L834.64 155.5 L835.00 158.9 L835.36 158.3 L835.72 160.8 L836.08 161.4 L836.44 162.6 L836.80 168.5 L837.16 169.1 L837.52 170.7 L837.88 170.3 L838.24 170.1 L838.60 170.4 L838.96 168.0 L839.32 169.1 L839.68 166.6 L840.04 168.6 L840.40 169.5 L840.76 170.0 L841.12 158.4 L841.48 149.5 L841.84 144.2 L842.20 140.1 L842.56 140.2 L842.92 145.7 L843.28 149.8 L843.64 155.1 L844.00 154.5 L844.36 155.4 L844.72 154.7 L845.08 157.2 L845.44 162.3 L845.80 164.8 L846.16 170.0 L846.52 170.7 L846.88 163.1 L847.24 167.4 L847.60 168.2 L847.96 170.4 L848.32 167.0 L848.68 170.7 L849.04 170.1 L849.40 168.3 L849.76 167.0 L850.12 166.3 L850.48 159.9 L850.84 151.3 L851.20 145.2 L851.56 141.8 L851.92 142.3 L852.28 145.2 L852.64 149.9 L853.00 155.5 L853.36 156.6 L853.72 158.5 L854.08 157.1 L854.44 160.7 L854.80 162.9 L855.16 165.7 L855.52 169.2 L855.88 168.6 L856.24 169.7 L856.60 168.5 L856.96 170.4 L857.32 166.5 L857.68 168.3 L858.04 168.3 L858.40 166.2 L858.76 166.3 L859.12 169.3 L859.48 170.0 L859.84 161.9 L860.20 152.3 L860.56 144.5 L860.92 139.2 L861.28 137.3 L861.64 143.0 L862.00 149.4 L862.36 150.8 L862.72 157.4 L863.08 152.9 L863.44 156.1 L863.80 161.4 L864.16 158.8 L864.52 166.2 L864.88 166.1 L865.24 170.6 L865.60 169.6 L865.96 170.9 L866.32 167.4 L866.68 168.1 L867.04 167.5 L867.40 166.9 L867.76 170.8 L868.12 170.2 L868.48 168.5 L868.84 167.4 L869.20 163.3 L869.56 154.8 L869.92 147.1 L870.28 142.2 L870.64 138.9 L871.00 143.5 L871.36 148.9 L871.72 154.1 L872.08 155.9 L872.44 154.3 L872.80 154.1 L873.16 155.6 L873.52 158.1 L873.88 160.8 L874.24 163.9 L874.60 162.6 L874.96 168.6 L875.32 167.5 L875.68 167.9 L876.04 170.8 L876.40 162.4 L876.76 170.6 L877.12 162.5 L877.48 171.1 L877.84 168.4 L878.20 167.1 L878.56 165.5 L878.92 156.4 L879.28 147.1 L879.64 140.9 L880.00 137.1 L880.36 141.9 L880.72 147.5 L881.08 153.2 L881.44 157.8 L881.80 153.8 L882.16 157.8 L882.52 157.7 L882.88 160.3 L883.24 163.9 L883.60 164.5 L883.96 168.8 L884.32 166.4 L884.68 170.4 L885.04 168.6 L885.40 169.4 L885.76 167.6 L886.12 168.4 L886.48 166.4 L886.84 170.0 L887.20 167.3 L887.56 166.9 L887.92 170.8 L888.28 157.6 L888.64 149.2 L889.00 143.8 L889.36 139.3 L889.72 142.6 L890.08 147.0 L890.44 149.2 L890.80 151.8 L891.16 156.0 L891.52 158.3 L891.88 156.2 L892.24 158.4 L892.60 163.4 L892.96 163.4 L893.32 169.2 L893.68 168.0 L894.04 168.6 L894.40 171.2 L894.76 165.6 L895.12 162.7 L895.48 170.1 L895.84 166.0 L896.20 169.4 L896.56 167.3 L896.92 166.7 L897.28 167.5 L897.64 158.4 L898.00 148.9 L898.36 145.1 L898.72 141.8 L899.08 143.1 L899.44 146.7 L899.80 148.4 L900.16 157.3 L900.52 157.1 L900.88 156.7 L901.24 160.3 L901.60 160.8 L901.96 164.0 L902.32 167.0 L902.68 168.4 L903.04 168.1 L903.40 168.4 L903.76 170.8 L904.12 170.8 L904.48 167.1 L904.84 168.5 L905.20 169.4 L905.56 169.6 L905.92 165.9 L906.28 166.6 L906.64 170.2 L907.00 159.5 L907.36 151.8 L907.72 144.4 L908.08 140.1 L908.44 140.5 L908.80 145.1 L909.16 150.7 L909.52 152.7 L909.88 156.9 L910.24 158.5 L910.60 159.0 L910.96 157.4 L911.32 161.7 L911.68 163.3 L912.04 167.2 L912.40 166.7 L912.76 166.1 L913.12 169.8 L913.48 169.2 L913.84 167.8 L914.20 169.3 L914.56 168.1 L914.92 168.3 L915.28 169.4 L915.64 166.1 L916.00 166.4 L916.36 161.7 L916.72 151.9 L917.08 146.7 L917.44 142.7 L917.80 140.6 L918.16 145.1 L918.52 149.1 L918.88 155.6 L919.24 152.3 L919.60 156.9 L919.96 159.4 L920.32 157.7 L920.68 162.2 L921.04 163.4 L921.40 166.5 L921.76 166.2 L922.12 165.7 L922.48 168.5 L922.84 168.1 L923.20 165.2 L923.56 168.5 L923.92 167.7 L924.28 169.7 L924.64 170.8 L925.00 166.7 L925.36 169.9 L925.72 163.2 L926.08 154.3 L926.44 147.1 L926.80 142.1 L927.16 140.3 L927.52 144.0 L927.88 148.8 L928.24 150.8 L928.60 154.9 L928.96 156.4 L929.32 158.5 L929.68 160.2 L930.04 158.8 L930.40 161.5 L930.76 163.2 L931.12 166.2 L931.48 166.9 L931.84 166.8 L932.20 170.3 L932.56 169.6 L932.92 162.7 L933.28 168.4 L933.64 166.9 L934.00 166.2 L934.36 170.9 L934.72 170.7 L935.08 164.2 L935.44 156.0 L935.80 148.1 L936.16 141.5 L936.52 137.4 L936.88 141.2 L937.24 147.1 L937.60 154.5 L937.96 153.5 L938.32 158.0 L938.68 154.2 L939.04 156.6 L939.40 158.7 L939.76 160.6 L940.12 165.2 L940.48 166.1 L940.84 168.5 L941.20 165.8 L941.56 170.4 L941.92 170.0 L942.28 167.0 L942.64 168.4 L943.00 169.8 L943.36 167.7 L943.72 169.4 L944.08 166.2 L944.44 166.0 L944.80 156.5 L945.16 148.1 L945.52 142.0 L945.88 137.3 L946.24 140.0 L946.60 145.9 L946.96 154.5 L947.32 152.6 L947.68 155.1 L948.04 156.3 L948.40 156.4 L948.76 161.6 L949.12 164.3 L949.48 164.7 L949.84 169.9 L950.20 167.4 L950.56 169.3 L950.92 166.0 L951.28 169.0 L951.64 170.0 L952.00 162.5 L952.36 168.9 L952.72 167.1 L953.08 166.1 L953.44 169.9 L953.80 165.8 L954.16 159.2 L954.52 149.2 L954.88 144.4 L955.24 139.7 L955.60 140.3 L955.96 145.8 L956.32 149.8 L956.68 153.3 L957.04 156.3 L957.40 154.2 L957.76 156.7 L958.12 158.4 L958.48 162.3 L958.84 165.1 L959.20 170.7 L959.56 166.0 L959.92 167.4 L960.28 169.8 L960.64 165.3 L961.00 168.9 L961.36 167.2 L961.72 167.7 L962.08 164.3 L962.44 163.8 L962.80 165.1 L963.16 170.9 L963.52 160.3 L963.88 151.7 L964.24 145.3 L964.60 141.9 L964.96 142.3 L965.32 145.8 L965.68 150.5 L966.04 151.2 L966.40 157.4 L966.76 156.8 L967.12 159.0 L967.48 157.0 L967.84 161.6 L968.20 164.8 L968.56 167.6 L969.2 180.6 L989.6 180.6" fill="none" stroke="#e9646b" stroke-opacity="0.82" stroke-width="0.95" stroke-linejoin="round"/><path d="M817.5 116 L817.5 180.8" stroke="#dfe6ea" stroke-width="0.8" stroke-dasharray="1.5 1.5"/></svg>
<div class="t ax" style="right:677.4px;text-align:right;top:120.6px;">50%</div>
<div class="t ax" style="right:677.4px;text-align:right;top:170.8px;">0%</div>
<div class="t ax" style="left:269.5px;width:200px;text-align:center;top:179.2px;">09:20 AM</div>
<div class="t ax" style="left:310.9px;width:200px;text-align:center;top:179.2px;">09:22 AM</div>
<div class="t ax" style="left:352.2px;width:200px;text-align:center;top:179.2px;">09:24 AM</div>
<div class="t ax" style="left:393.6px;width:200px;text-align:center;top:179.2px;">09:26 AM</div>
<div class="t ax" style="left:434.9px;width:200px;text-align:center;top:179.2px;">09:28 AM</div>
<div class="t ax" style="left:476.2px;width:200px;text-align:center;top:179.2px;">09:30 AM</div>
<div class="t ax" style="left:517.6px;width:200px;text-align:center;top:179.2px;">09:32 AM</div>
<div class="t ax" style="left:559.0px;width:200px;text-align:center;top:179.2px;">09:34 AM</div>
<div class="t ax" style="left:600.3px;width:200px;text-align:center;top:179.2px;">09:36 AM</div>
<div class="t ax" style="left:641.7px;width:200px;text-align:center;top:179.2px;">09:38 AM</div>
<div class="t ax" style="left:683.0px;width:200px;text-align:center;top:179.2px;">09:40 AM</div>
<div class="t ax" style="left:724.4px;width:200px;text-align:center;top:179.2px;">09:42 AM</div>
<div class="t ax" style="left:765.7px;width:200px;text-align:center;top:179.2px;">09:44 AM</div>
<div class="t ax" style="left:807.1px;width:200px;text-align:center;top:179.2px;">09:46 AM</div>
<div class="t ax" style="left:848.4px;width:200px;text-align:center;top:179.2px;">09:48 AM</div>
<div class="b " style="left:313.4px;top:208.1px;width:157.8px;height:24.2px;background:#f0f0f0;border-radius:1px"></div>
<svg style="left:326px;top:214.7px" width="20" height="11" viewBox="0 0 20 11" fill="none" stroke="#c4c4c4" stroke-width="1"><circle cx="5.4" cy="5.5" r="4.7"/><circle cx="14.4" cy="5.5" r="4.7"/><path d="M5.4 2.8 L5.4 5.7 L7.2 6.8" stroke-width="0.9"/><path d="M14.4 2.8 L14.4 5.7 L15.8 6.6" stroke-width="0.9"/></svg>
<div class="t " style="left:351.4px;top:210.0px;font-size:9.3px;color:#444">Compare time ranges</div>
<svg style="left:448.4px;top:217.8px" width="8" height="6" viewBox="0 0 8 6"><path d="M1.4 1 L4 3.6 L6.6 1" fill="none" stroke="#4fa9b4" stroke-width="1.1"/></svg>
<div class="t " style="left:120.2px;top:283.0px;font-size:10.4px;letter-spacing:0.21px;color:#4c4c4c">Top 10 Queries by Warnings</div>
<div class="t chg" style="left:120.2px;top:297.2px;">(CHANGE)</div>
<div class="b" style="left:986.3px;top:283.5px;width:2.5px;height:2.5px;border-radius:50%;background:#2a2a2a"></div>
<div class="b" style="left:990.1px;top:283.5px;width:2.5px;height:2.5px;border-radius:50%;background:#2a2a2a"></div>
<div class="b" style="left:994.0px;top:283.5px;width:2.5px;height:2.5px;border-radius:50%;background:#2a2a2a"></div>
<div class="t lab" style="left:120.2px;top:317.4px;">CHARTED COLUMN</div>
<div class="b " style="left:120.3px;top:337.2px;width:165.7px;height:23.4px;background:#f3f3f3"></div>
<div class="t " style="left:127.6px;top:338.8px;font-size:8.95px">Total Time</div>
<svg style="left:273px;top:344.6px" width="8" height="6" viewBox="0 0 8 6"><path d="M1.2 1 L4 3.8 L6.8 1" fill="none" stroke="#3fa6b3" stroke-width="1.2"/></svg>
<div class="t lab" style="left:120.2px;top:364.3px;">SELECT</div>
<div class="b " style="left:120.3px;top:384.0px;width:165.7px;height:104.4px;background:#f3f3f3"></div>
<div class="pill" style="top:391.3px"><span>Warnings</span><svg style="left:133.6px;top:4.2px" width="12" height="12" viewBox="0 0 12 12"><circle cx="5.8" cy="5.8" r="5.5" fill="#fff"/><path d="M3.7 3.7 L7.9 7.9 M7.9 3.7 L3.7 7.9" stroke="#2aa8b5" stroke-width="1.3"/></svg></div>
<div class="pill" style="top:414.7px"><span>Total Time</span><svg style="left:133.6px;top:4.2px" width="12" height="12" viewBox="0 0 12 12"><circle cx="5.8" cy="5.8" r="5.5" fill="#fff"/><path d="M3.7 3.7 L7.9 7.9 M7.9 3.7 L3.7 7.9" stroke="#2aa8b5" stroke-width="1.3"/></svg></div>
<div class="pill" style="top:438.1px"><span>Action</span><svg style="left:133.6px;top:4.2px" width="12" height="12" viewBox="0 0 12 12"><circle cx="5.8" cy="5.8" r="5.5" fill="#fff"/><path d="M3.7 3.7 L7.9 7.9 M7.9 3.7 L3.7 7.9" stroke="#2aa8b5" stroke-width="1.3"/></svg></div>
<div class="t " style="left:134.4px;top:466.0px;font-size:8.6px;color:#999">Add more...</div>
<div class="t lab" style="left:120.2px;top:492.5px;">FILTER BY QUERY TEXT</div>
<div class="b " style="left:120.3px;top:512.5px;width:165.7px;height:22.9px;background:#f3f3f3"></div>
<div class="t lab" style="left:120.2px;top:539.4px;">FILTER BY QUERY TAGS</div>
<div class="b " style="left:120.3px;top:560.3px;width:165.7px;height:24.1px;background:#f3f3f3"></div>
<div class="t lab" style="left:120.2px;top:588.3px;">ORDER BY</div>
<div class="b " style="left:120.3px;top:608.8px;width:165.7px;height:22.0px;background:#f3f3f3"></div>
<div class="t " style="left:127.6px;top:609.6px;font-size:9.2px">Warnings</div>
<svg style="left:273px;top:615.6px" width="8" height="6" viewBox="0 0 8 6"><path d="M1.2 1 L4 3.8 L6.8 1" fill="none" stroke="#3fa6b3" stroke-width="1.2"/></svg>
<svg style="left:0;top:0" width="1024" height="640" viewBox="0 0 1024 640"><path d="M349.0 304.1 L989.6 304.1" stroke="#ededed" stroke-width="1"/><path d="M349.0 331.5 L989.6 331.5" stroke="#ededed" stroke-width="1"/><path d="M349.0 358.7 L989.6 358.7" stroke="#ededed" stroke-width="1"/><path d="M349.0 386.0 L989.6 386.0" stroke="#d8d8d8" stroke-width="1"/><path d="M396.3 344.5 L396.3 386.0" stroke="#4f94d4" stroke-width="1"/><path d="M438.2 377.2 L438.2 386.0" stroke="#4f94d4" stroke-width="1"/><path d="M427.3 382.0 L427.3 386.0" stroke="#4f94d4" stroke-width="1"/><path d="M827.0 380.6 L827.0 386.0" stroke="#4f94d4" stroke-width="1"/><path d="M952.6 377.0 L952.6 386.0" stroke="#4f94d4" stroke-width="1"/><path d="M349.0 385.7 L368 385.7 L369 384.8 L370 385.7 L814.5 385.7 L817.5 383.8 L820.5 385.7 L989.6 385.7" fill="none" stroke="#f4be90" stroke-width="0.9"/><path d="M817.5 290 L817.5 386.0" stroke="#7fb1de" stroke-width="0.9" stroke-dasharray="1.8 1"/><circle cx="817.5" cy="307.3" r="2.1" fill="#fff" stroke="#4f94d4" stroke-width="0.9"/></svg>
<div class="t ax" style="right:677.4px;text-align:right;top:294.1px;">3sec</div>
<div class="t ax" style="right:677.4px;text-align:right;top:321.5px;">2sec</div>
<div class="t ax" style="right:677.4px;text-align:right;top:348.7px;">1sec</div>
<div class="t ax" style="right:677.4px;text-align:right;top:376.0px;">0sec</div>
<div class="t ax" style="left:269.5px;width:200px;text-align:center;top:384.8px;">09:20 AM</div>
<div class="t ax" style="left:310.9px;width:200px;text-align:center;top:384.8px;">09:22 AM</div>
<div class="t ax" style="left:352.2px;width:200px;text-align:center;top:384.8px;">09:24 AM</div>
<div class="t ax" style="left:393.6px;width:200px;text-align:center;top:384.8px;">09:26 AM</div>
<div class="t ax" style="left:434.9px;width:200px;text-align:center;top:384.8px;">09:28 AM</div>
<div class="t ax" style="left:476.2px;width:200px;text-align:center;top:384.8px;">09:30 AM</div>
<div class="t ax" style="left:517.6px;width:200px;text-align:center;top:384.8px;">09:32 AM</div>
<div class="t ax" style="left:559.0px;width:200px;text-align:center;top:384.8px;">09:34 AM</div>
<div class="t ax" style="left:600.3px;width:200px;text-align:center;top:384.8px;">09:36 AM</div>
<div class="t ax" style="left:641.7px;width:200px;text-align:center;top:384.8px;">09:38 AM</div>
<div class="t ax" style="left:683.0px;width:200px;text-align:center;top:384.8px;">09:40 AM</div>
<div class="t ax" style="left:724.4px;width:200px;text-align:center;top:384.8px;">09:42 AM</div>
<div class="t ax" style="left:765.7px;width:200px;text-align:center;top:384.8px;">09:44 AM</div>
<div class="t ax" style="left:807.1px;width:200px;text-align:center;top:384.8px;">09:46 AM</div>
<div class="t ax" style="left:848.4px;width:200px;text-align:center;top:384.8px;">09:48 AM</div>
<div class="b " style="left:712.0px;top:300.2px;width:100.2px;height:39.8px;background:#394144;border-radius:2px 2px 0 0"></div>
<div class="b " style="left:475.2px;top:333.3px;width:337.0px;height:56.5px;background:#394144;border-radius:2px"></div>
<div class="t tt" style="left:725.0px;top:301.6px;font-size:8.05px">May 11, 2020</div>
<div class="t tt" style="left:725.0px;top:310.9px;font-size:8.0px">9:41:40 AM CDT</div>
<div class="b " style="left:485.4px;top:344.0px;width:6.8px;height:6.8px;background:#ef6b73"></div>
<div class="t tt" style="left:498.6px;top:337.4px;">profile()</div>
<div class="t tt" style="right:221.6px;text-align:right;top:337.4px;">0µs</div>
<div class="b " style="left:485.4px;top:358.7px;width:6.8px;height:6.8px;background:#5b9bd5"></div>
<div class="t tt" style="left:498.6px;top:352.1px;">explain(verbosity:?)</div>
<div class="t tt" style="right:221.6px;text-align:right;top:352.1px;">2.89sec</div>
<div class="b " style="left:485.4px;top:373.2px;width:6.8px;height:6.8px;background:#f5a95b"></div>
<div class="t tt" style="left:498.6px;top:366.6px;">select `w`.`blocking_trx_id` , `t`.`trx_id` , `t`.`tr…</div>
<div class="t tt" style="right:221.6px;text-align:right;top:366.6px;">0µs</div>
<div class="b " style="left:313.4px;top:413.5px;width:157.8px;height:24.2px;background:#f0f0f0;border-radius:1px"></div>
<svg style="left:326px;top:420.1px" width="20" height="11" viewBox="0 0 20 11" fill="none" stroke="#c4c4c4" stroke-width="1"><circle cx="5.4" cy="5.5" r="4.7"/><circle cx="14.4" cy="5.5" r="4.7"/><path d="M5.4 2.8 L5.4 5.7 L7.2 6.8" stroke-width="0.9"/><path d="M14.4 2.8 L14.4 5.7 L15.8 6.6" stroke-width="0.9"/></svg>
<div class="t " style="left:351.4px;top:415.4px;font-size:9.3px;color:#444">Compare time ranges</div>
<svg style="left:448.4px;top:423.2px" width="8" height="6" viewBox="0 0 8 6"><path d="M1.4 1 L4 3.6 L6.6 1" fill="none" stroke="#4fa9b4" stroke-width="1.1"/></svg>
<div class="b " style="left:313.4px;top:451.6px;width:679.0px;height:32.4px;background:#f3f3f3"></div>
<div class="b " style="left:691.6px;top:451.6px;width:1.0px;height:32.4px;background:#e6e6e6"></div>
<div class="b " style="left:825.3px;top:451.6px;width:96.0px;height:32.4px;background:#2aa8b5"></div>
<div class="b " style="left:825.3px;top:484.0px;width:96.0px;height:100.2px;background:#e9f5f7"></div>
<div class="t " style="left:320.0px;top:457.8px;font-size:10px;color:#6e6e6e">Queries</div>
<div class="t " style="left:699.2px;top:457.8px;font-size:10.2px;color:#6e6e6e">Warnings</div>
<div class="b" style="left:801.8px;top:461.0px;width:2.2px;height:2.2px;border-radius:50%;background:#333"></div>
<div class="b" style="left:801.8px;top:465.2px;width:2.2px;height:2.2px;border-radius:50%;background:#333"></div>
<div class="b" style="left:801.8px;top:469.4px;width:2.2px;height:2.2px;border-radius:50%;background:#333"></div>
<div class="t " style="left:832.4px;top:457.8px;font-size:10.2px;color:#fff;-webkit-text-stroke:0.3px #fff">Total Time</div>
<div class="t " style="left:929.2px;top:457.8px;font-size:10.2px;color:#6e6e6e">Action</div>
<div class="b" style="left:320px;top:495.4px;width:10.6px;height:10.6px;border-radius:50%;background:#ea5862"></div>
<div class="t q" style="left:346.8px;top:490.1px;">profile()</div>
<div class="t num" style="right:211.8px;text-align:right;top:491.6px;">120</div>
<div class="t num" style="right:115.8px;text-align:right;top:491.6px;">628799</div>
<div class="t act" style="left:928.2px;top:491.0px;">query</div>
<div class="b " style="left:313.4px;top:516.9px;width:679.0px;height:1.0px;background:#ebebeb"></div>
<div class="b" style="left:320px;top:528.8px;width:10.6px;height:10.6px;border-radius:50%;background:#5597d6"></div>
<div class="t q" style="left:346.8px;top:523.5px;">explain(verbosity:?)</div>
<div class="t num" style="right:211.8px;text-align:right;top:525.0px;">9</div>
<div class="t num" style="right:115.8px;text-align:right;top:525.0px;">7859484</div>
<div class="t act" style="left:928.2px;top:524.4px;">query</div>
<div class="b " style="left:313.4px;top:550.3px;width:679.0px;height:1.0px;background:#ebebeb"></div>
<div class="b" style="left:320px;top:562.2px;width:10.6px;height:10.6px;border-radius:50%;background:#f6a95e"></div>
<div class="t q" style="left:346.8px;top:556.9px;font-size:8.44px">select `w`.`blocking_trx_id` , `t`.`trx_id` , `t`.`trx_mysql_thread_id` from `information_…</div>
<div class="t num" style="right:211.8px;text-align:right;top:558.4px;">2</div>
<div class="t num" style="right:115.8px;text-align:right;top:558.4px;">413.22</div>
<div class="t act" style="left:928.2px;top:557.8px;">query</div>
<div class="b " style="left:313.4px;top:583.7px;width:679.0px;height:1.0px;background:#ebebeb"></div>
<div class="b" style="left:959.5px;top:586.8px;width:40px;height:40px;border-radius:50%;background:#f99b1d;box-shadow:0 1px 6px rgba(0,0,0,0.12)"></div>
<svg style="left:969px;top:595px" width="22" height="24" viewBox="0 0 22 24"><path d="M3.4 1 L17.6 1 Q19.8 1 19.8 3.2 L19.8 21.6 L16.6 19.4 L3.4 19.4 Q1.2 19.4 1.2 17.2 L1.2 3.2 Q1.2 1 3.4 1 Z" fill="#fff6ea"/><path d="M4.2 14.4 Q10.5 18.8 16.8 14.4" fill="none" stroke="#f99b1d" stroke-width="1.3" stroke-linecap="round"/></svg>
</body></html>
